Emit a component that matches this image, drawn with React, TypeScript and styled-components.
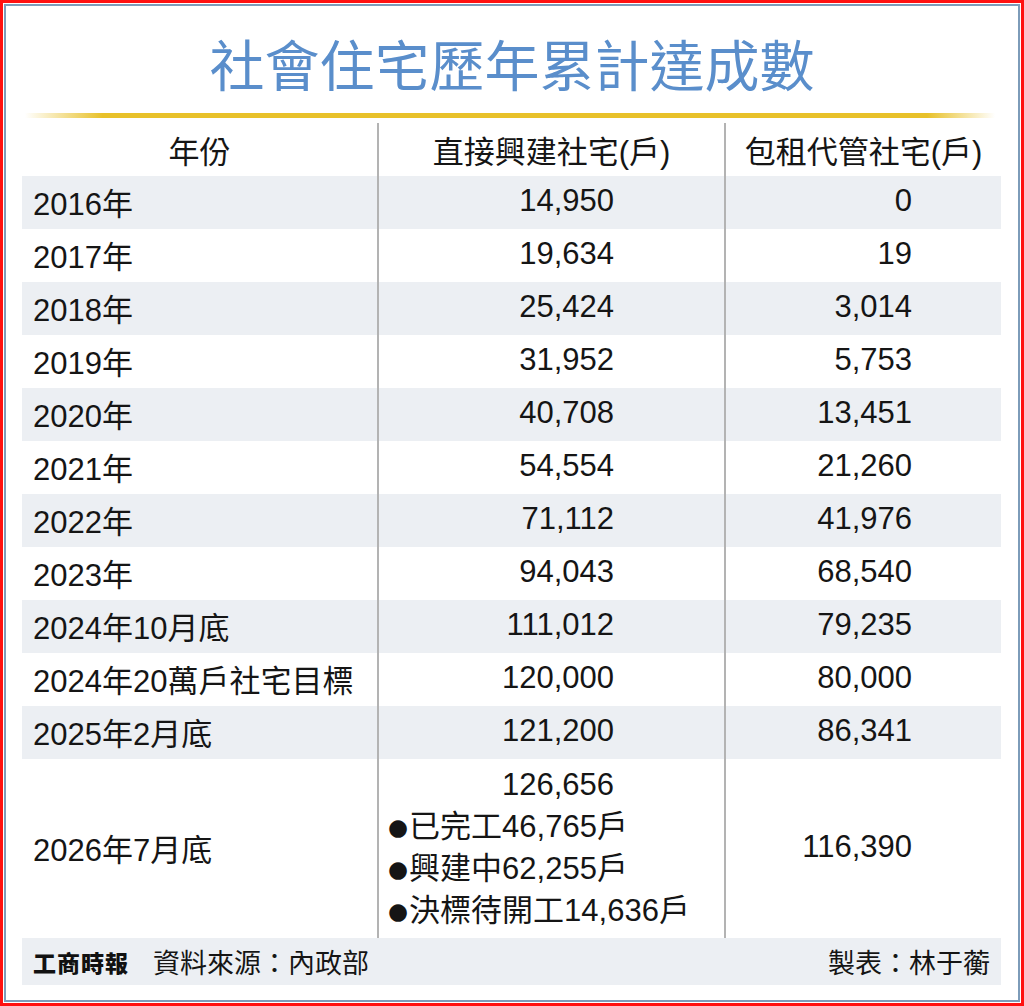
import { Fragment } from "react";
import styled, { createGlobalStyle } from "styled-components";

const GlobalStyle = createGlobalStyle`
	html, body {
		margin: 0;
		padding: 0;
		background: #ffffff;
	}
	body {
		font-family: "Liberation Sans", "Noto Sans CJK TC", sans-serif;
		color: #151515;
	}
`;

const FONT = `"Liberation Sans", "Noto Sans CJK TC", sans-serif`;
const SHADE = "#eceff3";
const LINE = "#b3b3b3";

const Frame = styled.div`
	width: 1024px;
	height: 1006px;
	box-sizing: border-box;
	border: 3px solid #ff1010;
	padding: 1px;
	background: #ffffff;
`;

const Sheet = styled.div`
	height: 100%;
	box-sizing: border-box;
	border: 2px solid #7d9cb9;
	display: flex;
	flex-direction: column;
`;

const Title = styled.h1`
	margin: 0;
	height: 107px;
	padding-top: 5px;
	box-sizing: border-box;
	display: flex;
	align-items: center;
	justify-content: center;
	font-family: "Noto Sans CJK TC", sans-serif;
	font-weight: 400;
	font-size: 55px;
	color: #5a8ecb;
`;

const GoldRule = styled.div`
	height: 5px;
	margin: 0 23px 0 19px;
	background: linear-gradient(
		90deg,
		rgba(232, 193, 42, 0) 0%,
		#e8c12a 8%,
		#e8c12a 93%,
		rgba(232, 193, 42, 0) 100%
	);
`;

const Table = styled.div`
	display: grid;
	grid-template-columns: 355px 347px 277px;
	margin: 5px 0 0 16px;
	width: 979px;
	font-family: ${FONT};
	font-size: 31px;
`;

const HeadCell = styled.div<{ $divider?: boolean }>`
	height: 53px;
	display: flex;
	align-items: center;
	justify-content: center;
	border-left: ${({ $divider }) => ($divider ? `2px solid ${LINE}` : "none")};
	box-sizing: border-box;
`;

const Cell = styled.div<{
	$shade?: boolean;
	$divider?: boolean;
	$align: "left" | "right";
	$pad: number;
	$tall?: boolean;
}>`
	height: ${({ $tall }) => ($tall ? "179px" : "53px")};
	display: flex;
	align-items: center;
	justify-content: ${({ $align }) =>
		$align === "left" ? "flex-start" : "flex-end"};
	box-sizing: border-box;
	padding-left: ${({ $align, $pad }) => ($align === "left" ? `${$pad}px` : 0)};
	padding-right: ${({ $align, $pad }) =>
		$align === "right" ? `${$pad}px` : 0};
	padding-bottom: 3px;
	background: ${({ $shade }) => ($shade ? SHADE : "transparent")};
	border-left: ${({ $divider }) => ($divider ? `2px solid ${LINE}` : "none")};
	white-space: nowrap;
`;

const Stack = styled.div`
	height: 179px;
	box-sizing: border-box;
	border-left: 2px solid ${LINE};
	padding: 5px 0 0 9px;
	display: flex;
	flex-direction: column;
	line-height: 42px;
	white-space: nowrap;
`;

const StackTotal = styled.div`
	text-align: right;
	padding-right: 110px;
`;

const Bullet = styled.div`
	display: flex;
	align-items: center;
`;

const Dot = styled.span`
	font-family: "DejaVu Sans", sans-serif;
	font-size: 23px;
	margin-right: 1px;
`;

const Footer = styled.div`
	grid-column: 1 / -1;
	height: 47px;
	background: ${SHADE};
	display: flex;
	align-items: center;
	justify-content: space-between;
	padding: 0 11px;
	box-sizing: border-box;
	font-family: "Noto Sans CJK TC", sans-serif;
	font-size: 27px;
`;

const Source = styled.div`
	display: flex;
	align-items: center;
	gap: 24px;
`;

const Brand = styled.span`
	font-family: "Noto Sans CJK TC", sans-serif;
	font-weight: 900;
	font-size: 23px;
	letter-spacing: 1px;
	color: #111;
`;

const rows: [string, string, string][] = [
	["2016年", "14,950", "0"],
	["2017年", "19,634", "19"],
	["2018年", "25,424", "3,014"],
	["2019年", "31,952", "5,753"],
	["2020年", "40,708", "13,451"],
	["2021年", "54,554", "21,260"],
	["2022年", "71,112", "41,976"],
	["2023年", "94,043", "68,540"],
	["2024年10月底", "111,012", "79,235"],
	["2024年20萬戶社宅目標", "120,000", "80,000"],
	["2025年2月底", "121,200", "86,341"],
];

const breakdown = ["已完工46,765戶", "興建中62,255戶", "決標待開工14,636戶"];

export default function App() {
	return (
		<>
			<GlobalStyle />
			<Frame>
				<Sheet>
					<Title>社會住宅歷年累計達成數</Title>
					<GoldRule />
					<Table>
						<HeadCell>年份</HeadCell>
						<HeadCell $divider>直接興建社宅(戶)</HeadCell>
						<HeadCell $divider>包租代管社宅(戶)</HeadCell>
						{rows.map(([year, direct, lease], i) => (
							<Fragment key={year}>
								<Cell $shade={i % 2 === 0} $align="left" $pad={11}>
									{year}
								</Cell>
								<Cell $shade={i % 2 === 0} $divider $align="right" $pad={110}>
									{direct}
								</Cell>
								<Cell $shade={i % 2 === 0} $divider $align="right" $pad={89}>
									{lease}
								</Cell>
							</Fragment>
						))}
						<Cell $tall $align="left" $pad={11}>
							2026年7月底
						</Cell>
						<Stack>
							<StackTotal>126,656</StackTotal>
							{breakdown.map((b) => (
								<Bullet key={b}>
									<Dot>●</Dot>
									{b}
								</Bullet>
							))}
						</Stack>
						<Cell $tall $divider $align="right" $pad={89}>
							116,390
						</Cell>
						<Footer>
							<Source>
								<Brand>工商時報</Brand>
								<span>資料來源：內政部</span>
							</Source>
							<span>製表：林于蘅</span>
						</Footer>
					</Table>
				</Sheet>
			</Frame>
		</>
	);
}
